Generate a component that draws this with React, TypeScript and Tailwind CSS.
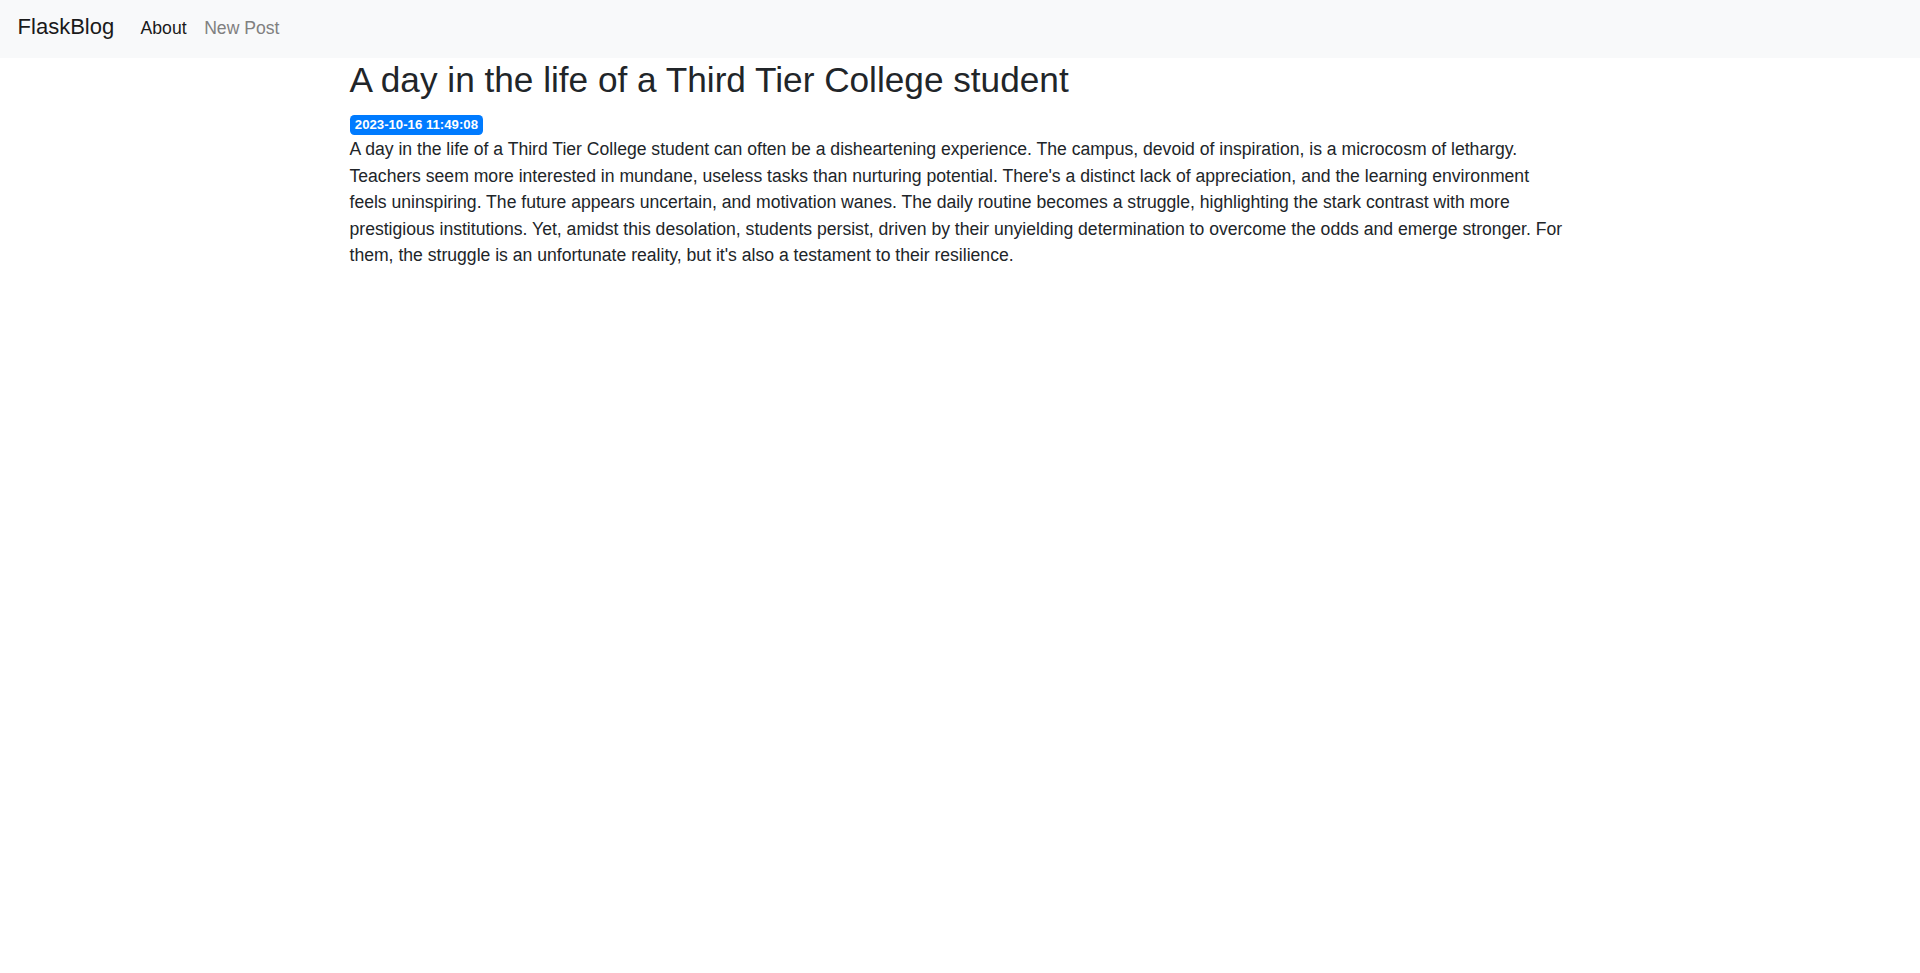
import React from 'react';

const post = {
  title: 'A day in the life of a Third Tier College student',
  created: '2023-10-16 11:49:08',
  content:
    "A day in the life of a Third Tier College student can often be a disheartening experience. The campus, devoid of inspiration, is a microcosm of lethargy. Teachers seem more interested in mundane, useless tasks than nurturing potential. There's a distinct lack of appreciation, and the learning environment feels uninspiring. The future appears uncertain, and motivation wanes. The daily routine becomes a struggle, highlighting the stark contrast with more prestigious institutions. Yet, amidst this desolation, students persist, driven by their unyielding determination to overcome the odds and emerge stronger. For them, the struggle is an unfortunate reality, but it's also a testament to their resilience.",
};

export default function App() {
  return (
    <div className="min-h-screen bg-white text-[#212529] font-['Liberation_Sans',Arial,sans-serif] text-[17.6px] leading-[26.4px]">
      {/* Navbar */}
      <nav className="h-[58px] bg-[#f8f9fa] flex items-baseline pt-[10px] px-[17.6px]">
        <a className="text-[22px] leading-[33px] text-[#1a1a1a] mr-[26.4px]">FlaskBlog</a>
        <ul className="flex items-baseline">
          <li>
            <a className="text-[#1a1a1a] mr-[17.6px]">About</a>
          </li>
          <li>
            <a className="text-[#808080]">New Post</a>
          </li>
        </ul>
      </nav>

      {/* Post */}
      <main className="w-[1221px] mx-auto">
        <h2 className="text-[35.2px] leading-[1.2] font-medium mt-[1px] mb-[8.8px]">{post.title}</h2>
        <div>
          <span className="inline-block bg-[#007bff] text-white text-[13.2px] font-bold leading-none px-[5.3px] py-[3.3px] rounded-[4.4px]">
            {post.created}
          </span>
        </div>
        <p>{post.content}</p>
      </main>
    </div>
  );
}
